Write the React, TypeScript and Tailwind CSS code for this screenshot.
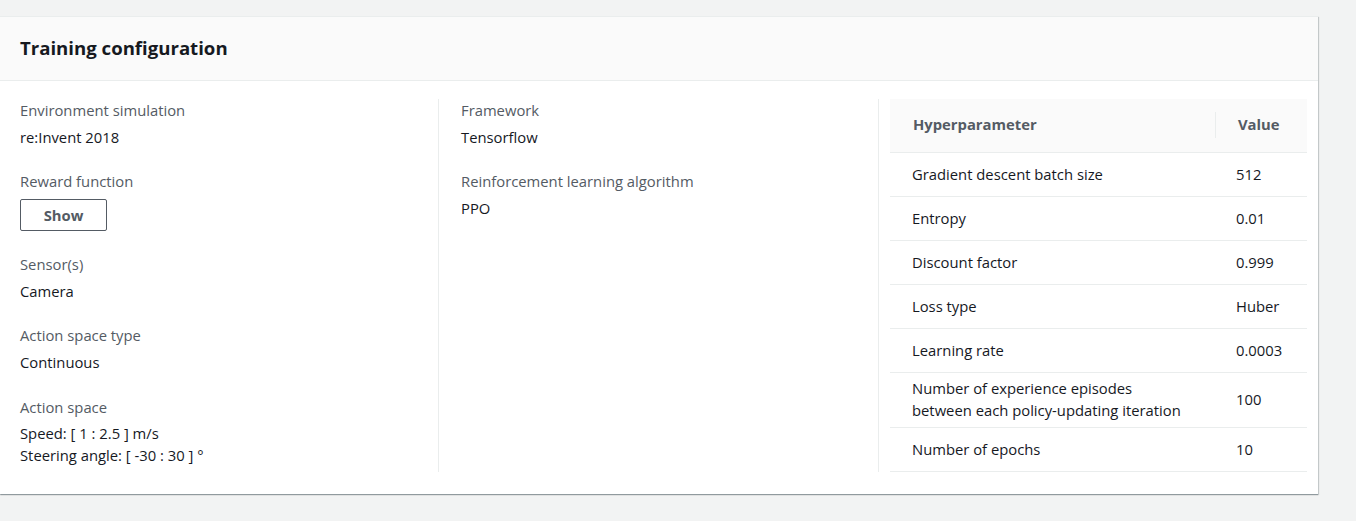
import React from "react";

const label = "text-[14.8px] leading-[22px] text-[#545b64]";
const value = "text-[14.8px] leading-[22px] text-[#16191f]";

function Field({ l, children, className = "" }: { l: string; children: React.ReactNode; className?: string }) {
  return (
    <div className={className}>
      <div className={label}>{l}</div>
      <div className={`${value} mt-[5px]`}>{children}</div>
    </div>
  );
}

const rows: [React.ReactNode, string, string][] = [
  ["Gradient descent batch size", "512", "h-[44px]"],
  ["Entropy", "0.01", "h-[44px]"],
  ["Discount factor", "0.999", "h-[44px]"],
  ["Loss type", "Huber", "h-[44px]"],
  ["Learning rate", "0.0003", "h-[44px]"],
  [
    <>
      Number of experience episodes
      <br />
      between each policy-updating iteration
    </>,
    "100",
    "h-[55px]",
  ],
  ["Number of epochs", "10", "h-[44px]"],
];

export default function App() {
  return (
    <div className="min-h-[521px] bg-[#f2f3f3] pt-4 font-['Open_Sans',sans-serif]">
      <div className="w-[1318px] bg-white border-t border-[#eaeded] shadow-[0_1px_1px_0_rgba(0,28,36,0.3),1px_1px_1px_0_rgba(0,28,36,0.15)]">
        <div className="h-[64px] bg-[#fafafa] border-b border-[#eaeded] flex items-center px-5">
          <h2 className="text-[18.6px] leading-[22px] font-bold text-[#16191f] -mt-[2px]">Training configuration</h2>
        </div>
        <div className="grid grid-cols-[438px_440px_440px] pt-[18px] pb-[22px]">
          <div className="pl-5 pr-5 flex flex-col gap-[22px]">
            <Field l="Environment simulation">re:Invent 2018</Field>
            <div>
              <div className={label}>Reward function</div>
              <button className="mt-[7px] h-[32px] w-[87px] border border-[#545b64] rounded-[2px] text-[14.8px] font-bold text-[#545b64] bg-white">
                Show
              </button>
            </div>
            <Field l="Sensor(s)">Camera</Field>
            <Field l="Action space type">Continuous</Field>
            <div className="pt-px">
              <div className={label}>Action space</div>
              <div className={`${value} mt-[4px]`}>Speed: [ 1 : 2.5 ] m/s</div>
              <div className={value}>Steering angle: [ -30 : 30 ] °</div>
            </div>
          </div>
          <div className="border-l border-[#eaeded] pl-[22px] flex flex-col gap-[22px]">
            <Field l="Framework">Tensorflow</Field>
            <Field l="Reinforcement learning algorithm">PPO</Field>
          </div>
          <div className="border-l border-[#eaeded] pl-[11px] pr-[12px]">
            <div className="w-[417px]">
              <div className="h-[54px] bg-[#fafafa] border-b border-[#eaeded] flex items-center pb-[2px]">
                <div className="w-[325px] pl-[23px] text-[14.8px] font-bold text-[#545b64]">Hyperparameter</div>
                <div className="h-[26px] border-l border-[#eaeded] pl-[22px] flex items-center text-[14.8px] font-bold text-[#545b64]">
                  Value
                </div>
              </div>
              {rows.map(([k, v, h], i) => (
                <div key={i} className={`${h} border-b border-[#eaeded] flex items-center pb-[2px] text-[14.8px] leading-[22px] text-[#16191f]`}>
                  <div className="w-[324px] pl-[22px]">{k}</div>
                  <div className="pl-[22px]">{v}</div>
                </div>
              ))}
            </div>
          </div>
        </div>
      </div>
    </div>
  );
}
